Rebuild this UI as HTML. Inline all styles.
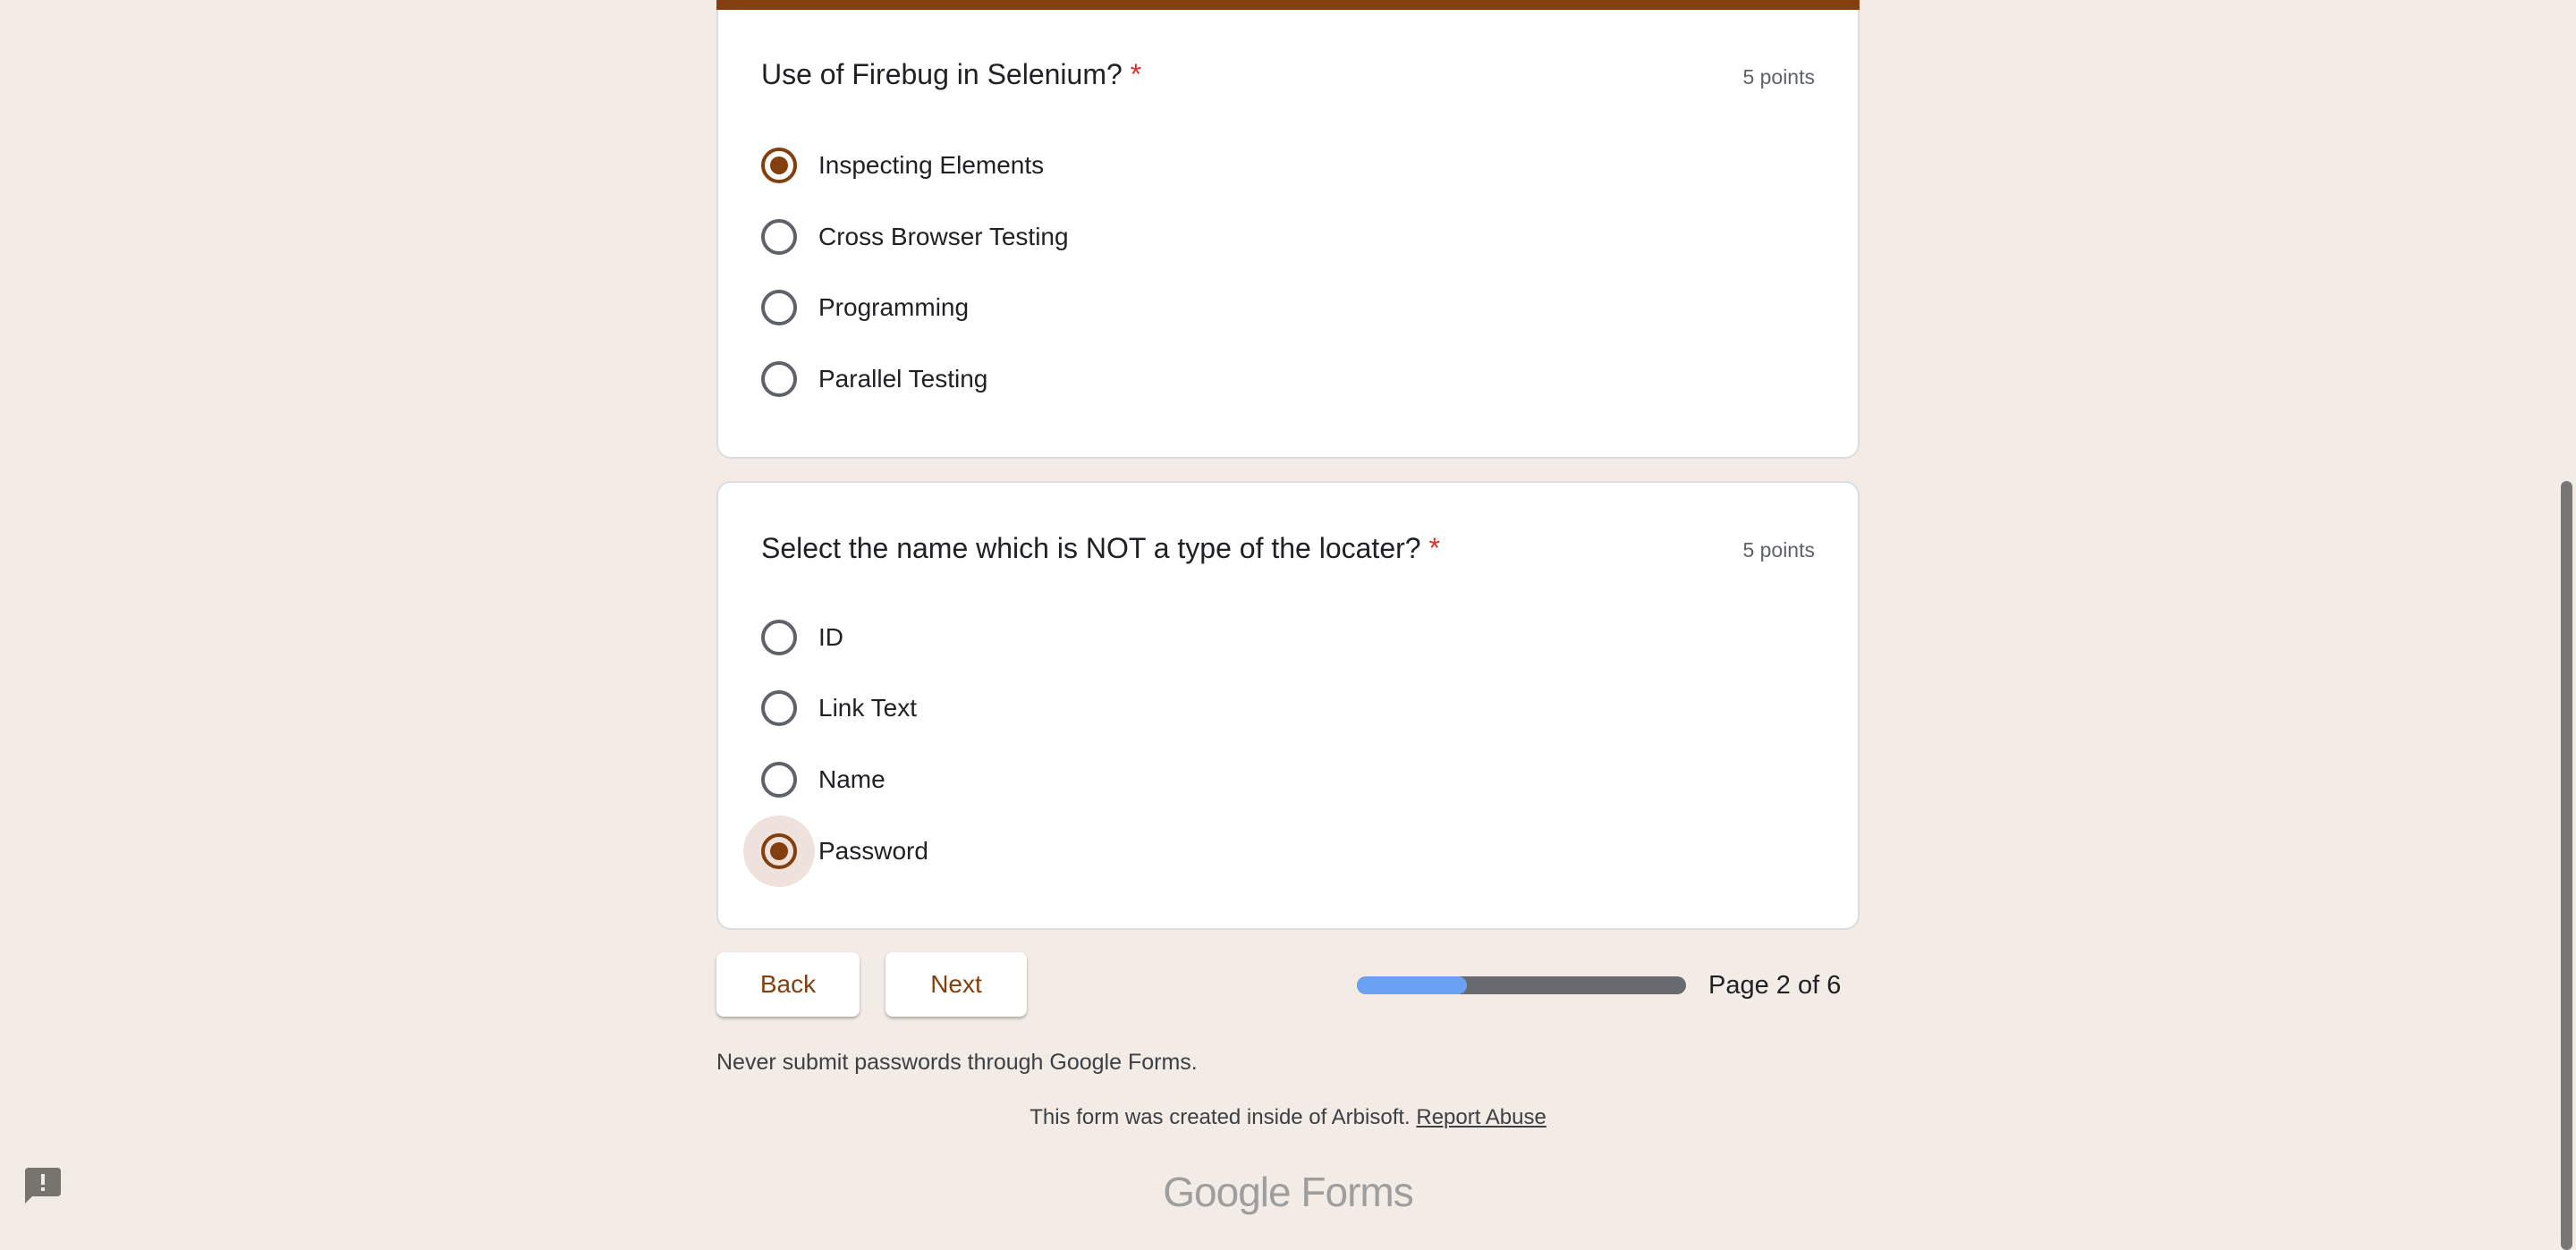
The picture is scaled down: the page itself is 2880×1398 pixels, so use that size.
<!DOCTYPE html>
<html><head><meta charset="utf-8"><style>
*{box-sizing:border-box;margin:0;padding:0}
html,body{width:2880px;height:1382px;overflow:hidden;background:#f3ebe6;font-family:"Liberation Sans",Roboto,Arial,sans-serif;}
.card{position:absolute;left:801px;width:1278px;background:#fff;border:2px solid #dadce0;border-radius:16px;}
.t{position:absolute;left:48px;font-size:32px;color:#202124;}
.t .r{color:#d93025}
.pts{position:absolute;right:48px;font-size:23px;color:#5f6368;}
.opt{position:absolute;left:48px;height:40px;}
.rad{position:absolute;left:0;top:0;width:40px;height:40px;border:4px solid #5f6368;border-radius:50%;}
.rad.on{border-color:#843f0f}
.rad.on::after{content:"";position:absolute;left:6px;top:6px;width:20px;height:20px;border-radius:50%;background:#843f0f}
.halo{position:absolute;left:-20px;top:-20px;width:80px;height:80px;border-radius:50%;background:#efe2dc}
.lab{position:absolute;left:64px;top:4px;font-size:28px;color:#202124;white-space:nowrap}
.btn{position:absolute;top:1065px;height:72px;background:#fff;border-radius:8px;box-shadow:0 2px 3px rgba(0,0,0,.3);color:#843f0f;font-size:28px;text-align:center;line-height:72px;font-weight:500}
</style></head><body>
<div class="card" style="top:-20px;height:533px;border-top:none;">
  <div style="position:absolute;left:-2px;right:-2px;top:0;height:31px;background:#843f0f;border-radius:0"></div>
  <div class="t" style="top:85px">Use of Firebug in Selenium? <span class="r">*</span></div>
  <div class="pts" style="top:93px">5 points</div>
  <div class="opt" style="top:185px"><div class="rad on"></div><div class="lab">Inspecting Elements</div></div>
  <div class="opt" style="top:265px"><div class="rad"></div><div class="lab">Cross Browser Testing</div></div>
  <div class="opt" style="top:344px"><div class="rad"></div><div class="lab">Programming</div></div>
  <div class="opt" style="top:424px"><div class="rad"></div><div class="lab">Parallel Testing</div></div>
</div>
<div class="card" style="top:538px;height:502px;">
  <div class="t" style="top:55px">Select the name which is NOT a type of the locater? <span class="r">*</span></div>
  <div class="pts" style="top:62px">5 points</div>
  <div class="opt" style="top:153px"><div class="rad"></div><div class="lab">ID</div></div>
  <div class="opt" style="top:232px"><div class="rad"></div><div class="lab">Link Text</div></div>
  <div class="opt" style="top:312px"><div class="rad"></div><div class="lab">Name</div></div>
  <div class="opt" style="top:392px"><div class="halo"></div><div class="rad on"></div><div class="lab">Password</div></div>
</div>
<div class="btn" style="left:801px;width:160px">Back</div>
<div class="btn" style="left:990px;width:158px">Next</div>
<div style="position:absolute;left:1517px;top:1092px;width:368px;height:20px;border-radius:10px;background:#676b70;overflow:hidden"><div style="width:123px;height:20px;background:#6aa1f2;border-radius:10px"></div></div>
<div style="position:absolute;left:1910px;top:1086px;font-size:29px;color:#202124">Page 2 of 6</div>
<div style="position:absolute;left:801px;top:1174px;font-size:25px;color:#3c4043">Never submit passwords through Google Forms.</div>
<div style="position:absolute;left:0;width:2880px;text-align:center;top:1236px;font-size:24px;color:#3c4043">This form was created inside of Arbisoft. <u>Report Abuse</u></div>
<div style="position:absolute;left:0;width:2880px;text-align:center;top:1306px;font-size:46px;color:#9e9e9e;letter-spacing:-1px"><span>Google</span> <span>Forms</span></div>
<svg style="position:absolute;left:28px;top:1306px" width="40" height="40" viewBox="0 0 40 40"><path d="M4 0H36Q40 0 40 4V28Q40 32 36 32H8L0 40V4Q0 0 4 0Z" fill="#77736f"/><rect x="18" y="7" width="4" height="12" fill="#f3ebe6"/><rect x="18" y="22" width="4" height="4" fill="#f3ebe6"/></svg>
<div style="position:absolute;left:2863px;top:538px;width:13px;height:860px;border-radius:7px;background:#777"></div>
</body></html>
